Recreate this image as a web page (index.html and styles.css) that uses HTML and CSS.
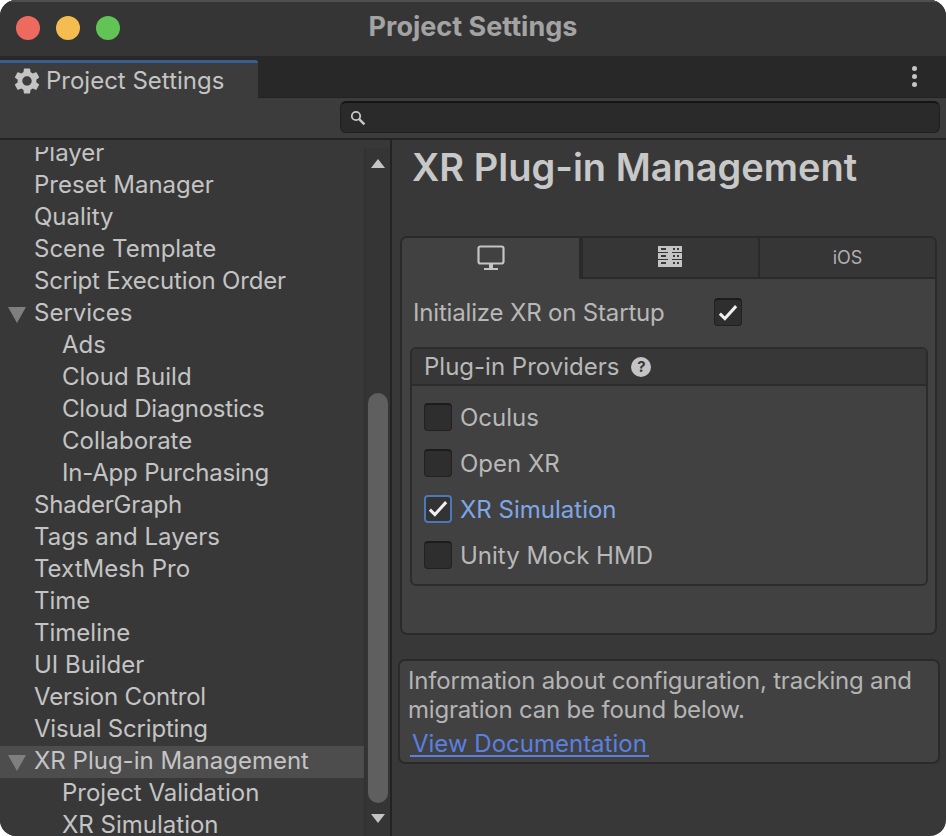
FILE: index.html
```html
<!DOCTYPE html>
<html lang="en">
<head>
    <meta charset="UTF-8">
    <meta name="viewport" content="width=device-width, initial-scale=1.0">
    <title>Project Settings</title>
    <link rel="stylesheet" href="styles.css">
</head>
<body>
    <div class="window">
        <div class="titlebar">
            <div class="lights">
                <span class="light red"></span>
                <span class="light yellow"></span>
                <span class="light green"></span>
            </div>
            <div class="title">Project Settings</div>
        </div>

        <div class="tabstrip">
            <div class="window-tab">
                <svg class="gear" viewBox="2 2 20 20" width="26" height="26"><path fill="#c4c4c4" d="M19.14 12.94c.04-.3.06-.61.06-.94 0-.32-.02-.64-.07-.94l2.03-1.58a.49.49 0 0 0 .12-.61l-1.92-3.32a.488.488 0 0 0-.59-.22l-2.39.96c-.5-.38-1.03-.7-1.62-.94l-.36-2.54a.484.484 0 0 0-.48-.41h-3.84c-.24 0-.43.17-.47.41l-.36 2.54c-.59.24-1.13.57-1.62.94l-2.39-.96c-.22-.08-.47 0-.59.22L2.74 8.87c-.12.21-.08.47.12.61l2.03 1.58c-.05.3-.09.63-.09.94s.02.64.07.94l-2.03 1.58a.49.49 0 0 0-.12.61l1.92 3.32c.12.22.37.29.59.22l2.39-.96c.5.38 1.03.7 1.62.94l.36 2.54c.05.24.24.41.48.41h3.84c.24 0 .44-.17.47-.41l.36-2.54c.59-.24 1.13-.56 1.62-.94l2.39.96c.22.08.47 0 .59-.22l1.92-3.32c.12-.22.07-.47-.12-.61l-2.01-1.58zM12 15.6c-1.98 0-3.6-1.62-3.6-3.6s1.62-3.6 3.6-3.6 3.6 1.62 3.6 3.6-1.62 3.6-3.6 3.6z"/></svg>
                <span>Project Settings</span>
            </div>
            <div class="kebab"><i></i><i></i><i></i></div>
        </div>

        <div class="toolbar">
            <div class="search">
                <svg viewBox="0 0 16 16" width="16" height="16"><circle cx="6" cy="6" r="4.2" fill="none" stroke="#c8c8c8" stroke-width="1.8"/><path d="M9.2 9.2l5.2 5.2" stroke="#c8c8c8" stroke-width="2.4"/></svg>
            </div>
        </div>

        <div class="content">
            <div class="sidebar">
                <div class="tree-wrap">
                    <ul class="tree">
                        <li>Player</li>
                        <li>Preset Manager</li>
                        <li>Quality</li>
                        <li>Scene Template</li>
                        <li class="tight">Script Execution Order</li>
                        <li class="parent"><span class="fold"></span>Services</li>
                        <li class="child">Ads</li>
                        <li class="child">Cloud Build</li>
                        <li class="child tight">Cloud Diagnostics</li>
                        <li class="child">Collaborate</li>
                        <li class="child tight">In-App Purchasing</li>
                        <li class="tight">ShaderGraph</li>
                        <li>Tags and Layers</li>
                        <li>TextMesh Pro</li>
                        <li>Time</li>
                        <li>Timeline</li>
                        <li>UI Builder</li>
                        <li class="tight">Version Control</li>
                        <li class="tight">Visual Scripting</li>
                        <li class="parent selected"><span class="fold"></span>XR Plug-in Management</li>
                        <li class="child">Project Validation</li>
                        <li class="child">XR Simulation</li>
                    </ul>
                </div>
                <div class="scrollbar">
                    <span class="arrow up"></span>
                    <div class="thumb"></div>
                    <span class="arrow down"></span>
                </div>
            </div>

            <div class="main">
                <h1>XR Plug-in Management</h1>

                <div class="panel">
                    <div class="tabs">
                        <div class="tab active">
                            <svg viewBox="0 0 28 26" width="28" height="26"><rect x="1.5" y="1.5" width="25" height="17" rx="2" fill="none" stroke="#c4c4c4" stroke-width="2.2"/><path d="M12 19h4v4h-4z" fill="#c4c4c4"/><path d="M7 23h14v2H7z" fill="#c4c4c4"/></svg>
                        </div>
                        <div class="tab servers">
                            <svg viewBox="0 0 24 24" width="24" height="24"><path fill="#c4c4c4" d="M0 1h24v6H14v1h10v6H14v1h10v7H0v-7h10v-1H0V8h10V7H0z"/><path fill="#3a3a3a" d="M3 3h5v2H3zM15 3h2v2h-2zM19 3h2v2h-2zM3 10h5v2H3zM15 10h2v2h-2zM19 10h2v2h-2zM3 17h5v2H3zM15 17h2v2h-2zM19 17h2v2h-2z"/></svg>
                        </div>
                        <div class="tab ios">iOS</div>
                    </div>

                    <div class="startup">
                        <span class="startup-label">Initialize XR on Startup</span>
                        <span class="check on"><svg viewBox="0 0 16 16" width="20" height="20"><path d="M1.5 8.5l4 4 9-10" fill="none" stroke="#f0f0f0" stroke-width="2.4"/></svg></span>
                    </div>

                    <div class="providers">
                        <div class="providers-head">
                            <span>Plug-in Providers</span>
                            <span class="help">?</span>
                        </div>
                        <div class="providers-list">
                            <div class="provider"><span class="check"></span>Oculus</div>
                            <div class="provider"><span class="check"></span>Open XR</div>
                            <div class="provider active"><span class="check on"><svg viewBox="0 0 16 16" width="20" height="20"><path d="M1.5 8.5l4 4 9-10" fill="none" stroke="#f0f0f0" stroke-width="2.4"/></svg></span>XR Simulation</div>
                            <div class="provider"><span class="check"></span>Unity Mock HMD</div>
                        </div>
                    </div>
                </div>

                <div class="info">
                    <p>Information about configuration, tracking and migration can be found below.</p>
                    <a class="doc-link" href="#">View Documentation</a>
                </div>
            </div>
        </div>
    </div>
</body>
</html>
```

FILE: styles.css
```css
* {
    box-sizing: border-box;
}

html, body {
    margin: 0;
    padding: 0;
    background-color: #ffffff;
}

body {
    width: 946px;
    height: 836px;
    overflow: hidden;
    font-family: Inter, "Liberation Sans", sans-serif;
    font-size: 24px;
    color: #c4c4c4;
}

.window {
    width: 946px;
    height: 836px;
    display: flex;
    flex-direction: column;
    border-radius: 16px;
    overflow: hidden;
    background-color: #383838;
}

/* title bar */
.titlebar {
    height: 56px;
    flex: none;
    display: flex;
    align-items: center;
    position: relative;
    background-color: #353535;
    border-top: 2px solid #4f4f4f;
}

.lights {
    display: flex;
    gap: 16px;
    padding-left: 16px;
    margin-top: -2px;
}

.light {
    width: 24px;
    height: 24px;
    border-radius: 50%;
}

.red { background-color: #ee6a5f; }
.yellow { background-color: #f5bd4f; }
.green { background-color: #61c454; }

.title {
    position: absolute;
    left: 0;
    right: 0;
    top: 9px;
    text-align: center;
    font-weight: 700;
    font-size: 27px;
    line-height: 32px;
    color: #a3a3a3;
}

/* window tab */
.tabstrip {
    height: 42px;
    flex: none;
    display: flex;
    justify-content: space-between;
    background-color: #282828;
    border-bottom: 1px solid #232323;
    padding-top: 4px;
}

.window-tab {
    width: 258px;
    height: 38px;
    display: flex;
    align-items: center;
    gap: 6px;
    padding-left: 14px;
    background-color: #3c3c3c;
    border-top: 3px solid #3a5f8e;
    border-top-right-radius: 3px;
    color: #c4c4c4;
}

.kebab {
    width: 14px;
    margin: 6px 25px 0 0;
    display: flex;
    flex-direction: column;
    align-items: center;
    gap: 3px;
}

.kebab i {
    width: 5px;
    height: 5px;
    border-radius: 50%;
    background-color: #c4c4c4;
}

/* search */
.toolbar {
    height: 42px;
    flex: none;
    display: flex;
    justify-content: flex-end;
    padding: 3px 6px 0 0;
    background-color: #3c3c3c;
    border-bottom: 2px solid #232323;
}

.search {
    width: 600px;
    height: 32px;
    display: flex;
    align-items: center;
    padding-left: 9px;
    background-color: #2a2a2a;
    border: 1px solid #202020;
    border-top: 2px solid #151515;
    border-radius: 6px;
}

/* content */
.content {
    flex: 1;
    display: flex;
    min-height: 0;
}

.sidebar {
    width: 392px;
    flex: none;
    display: flex;
    justify-content: space-between;
    overflow: hidden;
    background-color: #383838;
    border-right: 2px solid #232323;
}

.tree-wrap {
    width: 364px;
    margin-top: 7px;
    overflow: hidden;
}

.tree {
    list-style: none;
    margin: -9px 0 0;
    padding: 0;
}

.tree li {
    height: 32px;
    line-height: 30px;
    padding-left: 34px;
    white-space: nowrap;
    position: relative;
}

.tree li.child {
    padding-left: 62px;
}

.tree li.tight {
    letter-spacing: -0.2px;
}

.tree li.selected {
    background-color: #4d4d4d;
}

.fold {
    position: absolute;
    left: 8px;
    top: 9px;
    width: 0;
    height: 0;
    border-left: 9px solid transparent;
    border-right: 9px solid transparent;
    border-top: 16px solid #7f7f7f;
}

.scrollbar {
    width: 26px;
    display: flex;
    flex-direction: column;
    align-items: center;
    background-color: #353535;
    border-left: 2px solid #323232;
    margin-top: 8px;
}

.thumb {
    width: 20px;
    height: 410px;
    border-radius: 10px;
    background-color: #5f5f5f;
    margin: 225px 0 11px;
}

.arrow {
    width: 0;
    height: 0;
    border-left: 7px solid transparent;
    border-right: 7px solid transparent;
}

.arrow.up {
    border-bottom: 9px solid #c4c4c4;
    margin-top: 11px;
}

.arrow.down {
    border-top: 9px solid #c4c4c4;
}

/* main */
.main {
    flex: 1;
    min-width: 0;
    padding: 0 6px 0 6px;
}

h1 {
    margin: 0;
    padding: 5px 0 0 14px;
    height: 96px;
    font-size: 38px;
    line-height: 44px;
    font-weight: 600;
    color: #c8c8c8;
}

.panel {
    margin: 0 3px 0 2px;
    height: 399px;
    background-color: #414141;
    border: 2px solid #2a2a2a;
    border-radius: 7px;
    overflow: hidden;
}

.tabs {
    display: flex;
    height: 41px;
}

.tab {
    display: flex;
    align-items: center;
    justify-content: center;
    flex: none;
    width: 177px;
    height: 41px;
    padding-bottom: 1px;
    background-color: #363636;
    border-left: 2px solid #2a2a2a;
    border-bottom: 2px solid #2a2a2a;
}

.tab.active {
    width: 179px;
    border: none;
    border-right: 2px solid #2a2a2a;
    background-color: #414141;
}

.tab.servers {
    padding-right: 2px;
}

.tab.ios {
    flex: 1;
    font-size: 18px;
    color: #b0b0b0;
}

.startup {
    display: flex;
    align-items: center;
    height: 28px;
    margin-top: 19px;
    padding-left: 11px;
}

.startup-label {
    width: 301px;
    letter-spacing: -0.17px;
    color: #b8b8b8;
}

.check {
    width: 28px;
    height: 28px;
    flex: none;
    display: flex;
    align-items: center;
    justify-content: center;
    background-color: #2e2e2e;
    border: 1px solid #212121;
    border-top: 2px solid #1c1c1c;
    border-radius: 4px;
}

.providers {
    margin: 21px 7px 0 8px;
    height: 239px;
    border: 2px solid #2c2c2c;
    border-radius: 6px;
}

.providers-head {
    height: 37px;
    display: flex;
    align-items: center;
    gap: 12px;
    padding-left: 12px;
    background-color: #373737;
    border-bottom: 2px solid #2c2c2c;
    border-radius: 4px 4px 0 0;
    color: #b8b8b8;
}

.help {
    width: 20px;
    height: 20px;
    border-radius: 50%;
    background-color: #c4c4c4;
    color: #383838;
    font-size: 15px;
    font-weight: 700;
    line-height: 20px;
    text-align: center;
}

.providers-list {
    display: flex;
    flex-direction: column;
    gap: 18px;
    padding: 17px 0 0 12px;
}

.provider {
    display: flex;
    align-items: center;
    gap: 8px;
    height: 28px;
    color: #b8b8b8;
}

.provider.active {
    color: #7ea7e8;
}

.provider.active .check {
    border: 2px solid #4a78b8;
    background-color: #333333;
}

/* info box */
.info {
    margin-top: 24px;
    height: 105px;
    padding: 5px 8px 0 8px;
    background-color: #414141;
    border: 2px solid #2a2a2a;
    border-radius: 7px;
    color: #b4b4b4;
}

.info p {
    margin: 0;
    line-height: 29px;
    letter-spacing: -0.2px;
}

.doc-link {
    display: inline-block;
    margin: 8px 0 0 2px;
    padding: 0 2px;
    line-height: 23px;
    color: #5a80e0;
    text-decoration: none;
    border-bottom: 2px solid #5a80e0;
}
```
